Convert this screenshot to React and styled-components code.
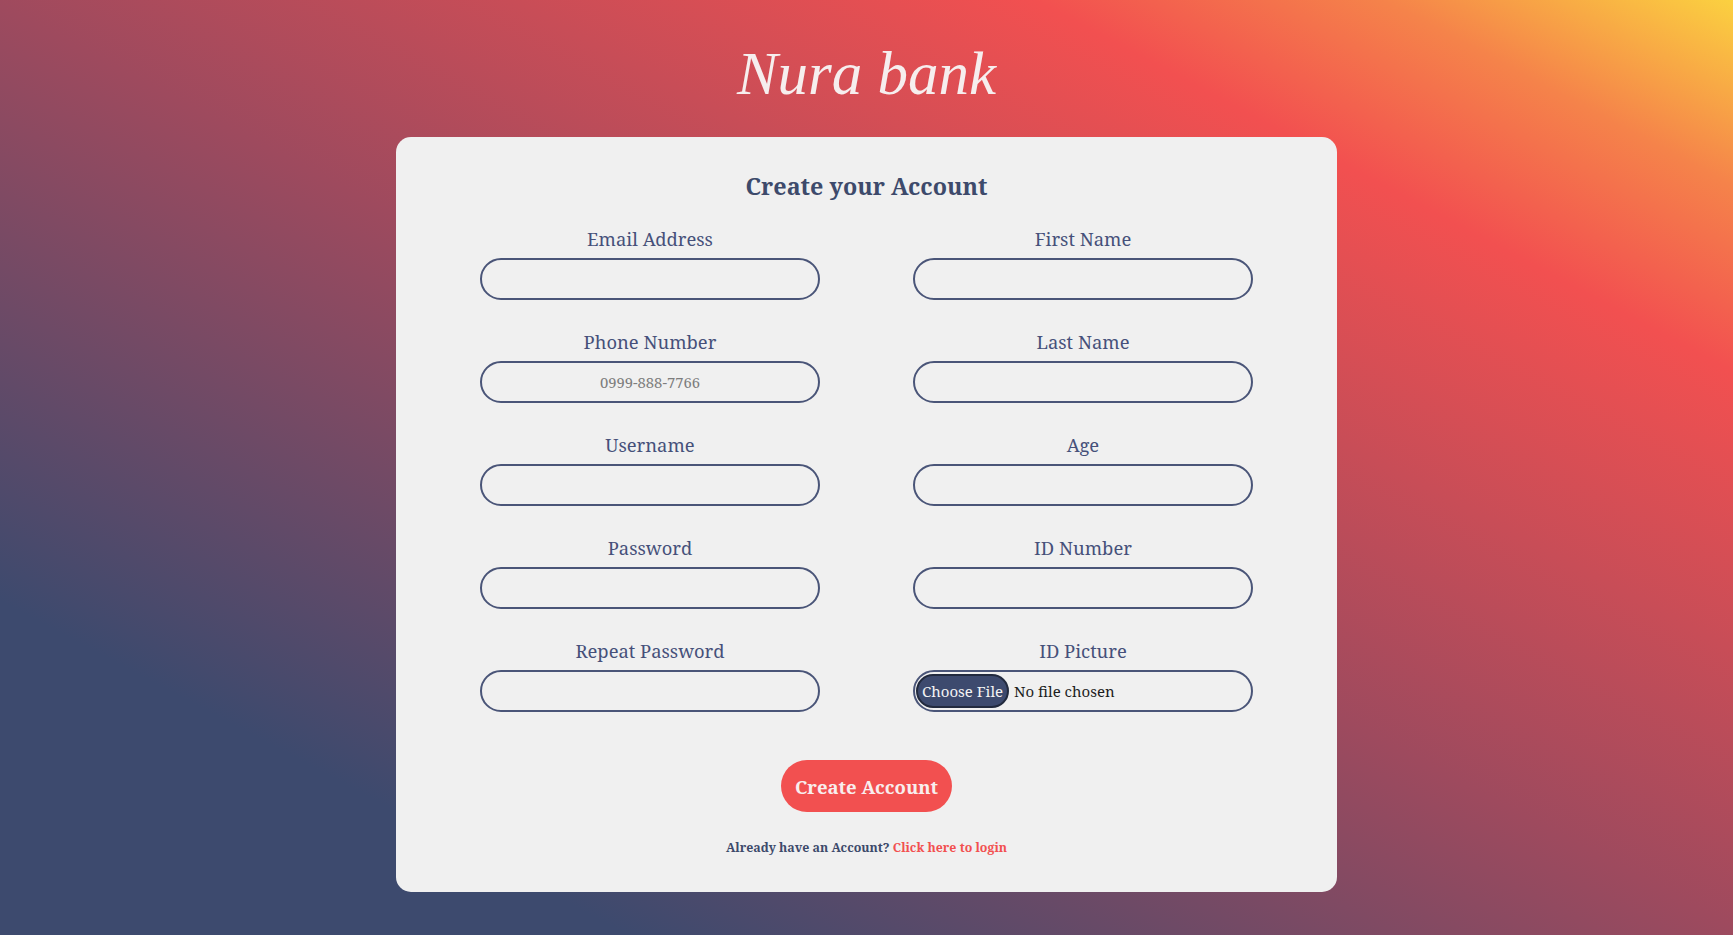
import React from "react";
import styled, { createGlobalStyle } from "styled-components";

const GlobalStyle = createGlobalStyle`
  html, body {
    margin: 0;
    padding: 0;
  }
  body {
    min-height: 100vh;
    font-family: "Noto Serif", "DejaVu Serif", serif;
    background: linear-gradient(28deg, #3d4a6e 0%, #3d4a6e 18%, #9e4a5e 50%, #f25050 80%, #f5834a 90%, #fbd140 100%);
    background-attachment: fixed;
  }
`;

const Page = styled.div`
  min-height: 100vh;
  display: flex;
  flex-direction: column;
  align-items: center;
  box-sizing: border-box;
  padding-top: 36px;
`;

const Logo = styled.h1`
  margin: 0;
  font-family: "Liberation Serif", serif;
  font-style: italic;
  font-weight: 400;
  font-size: 61px;
  line-height: 76px;
  color: #f6eeee;
`;

const Card = styled.form`
  width: 941px;
  box-sizing: border-box;
  margin-top: 25px;
  padding: 33px 84px 35px;
  background-color: #f0f0f0;
  border-radius: 15px;
  display: flex;
  flex-direction: column;
  align-items: center;
`;

const Title = styled.h2`
  margin: 0;
  font-size: 23.3px;
  line-height: 32px;
  font-weight: 700;
  color: #3d4a6b;
`;

const Grid = styled.div`
  margin-top: 25px;
  display: grid;
  grid-template-columns: 340px 340px;
  column-gap: 93px;
  row-gap: 30px;
`;

const Field = styled.div`
  display: flex;
  flex-direction: column;
  align-items: center;
  gap: 7px;
`;

const Label = styled.label`
  font-size: 18.4px;
  line-height: 24px;
  color: #46507a;
`;

const Input = styled.input`
  width: 340px;
  height: 42px;
  box-sizing: border-box;
  border: 2px solid #4a5578;
  border-radius: 21px;
  background: transparent;
  text-align: center;
  font-family: "Noto Serif", "DejaVu Serif", serif;
  font-size: 14.8px;
  color: #333;
  outline: none;

  &::placeholder {
    color: #7d7d7d;
  }
`;

const FileInput = styled.input`
  width: 340px;
  height: 42px;
  box-sizing: border-box;
  border: 2px solid #4a5578;
  border-radius: 21px;
  padding: 2px 1px;
  font-family: "Noto Serif", "DejaVu Serif", serif;
  font-size: 15px;
  color: #1e1e1e;

  &::file-selector-button {
    height: 34px;
    margin-right: 5px;
    padding: 0 4px;
    border: 2px solid #222a3e;
    border-radius: 17px;
    background-color: #3d4a6e;
    color: #f3f3f3;
    font-family: "Noto Serif", "DejaVu Serif", serif;
    font-size: 15px;
  }
`;

const SubmitBtn = styled.button`
  margin-top: 48px;
  height: 52px;
  padding: 0 14px;
  border: none;
  border-radius: 26px;
  background-color: #f25050;
  color: #f8eeee;
  font-family: "Noto Serif", "DejaVu Serif", serif;
  font-size: 18.5px;
  font-weight: 700;
`;

const Footer = styled.p`
  margin: 27px 0 0;
  font-size: 12.4px;
  line-height: 18px;
  font-weight: 700;
  color: #3d4a6b;
`;

const LoginLink = styled.a`
  color: #f25050;
  text-decoration: none;
`;

const fields = [
  { label: "Email Address", type: "email" },
  { label: "First Name", type: "text" },
  { label: "Phone Number", type: "tel", placeholder: "0999-888-7766" },
  { label: "Last Name", type: "text" },
  { label: "Username", type: "text" },
  { label: "Age", type: "number" },
  { label: "Password", type: "password" },
  { label: "ID Number", type: "text" },
  { label: "Repeat Password", type: "password" },
  { label: "ID Picture", type: "file" },
];

const App = () => {
  return (
    <>
      <GlobalStyle />
      <Page>
        <Logo>Nura bank</Logo>
        <Card onSubmit={(e) => e.preventDefault()}>
          <Title>Create your Account</Title>
          <Grid>
            {fields.map((f) => (
              <Field key={f.label}>
                <Label>{f.label}</Label>
                {f.type === "file" ? (
                  <FileInput type='file' />
                ) : (
                  <Input type={f.type} placeholder={f.placeholder} />
                )}
              </Field>
            ))}
          </Grid>
          <SubmitBtn type='submit'>Create Account</SubmitBtn>
          <Footer>
            Already have an Account? <LoginLink href='#'>Click here to login</LoginLink>
          </Footer>
        </Card>
      </Page>
    </>
  );
};

export default App;
